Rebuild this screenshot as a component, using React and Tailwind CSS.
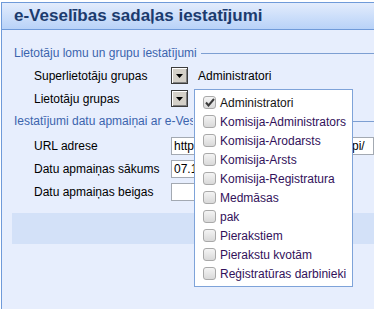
const groups = [
  "Administratori",
  "Komisija-Administrators",
  "Komisija-Arodarsts",
  "Komisija-Arsts",
  "Komisija-Registratura",
  "Medmāsas",
  "pak",
  "Pierakstiem",
  "Pierakstu kvotām",
  "Reģistratūras darbinieki",
];

function DropButton() {
  return (
    <div className="w-[17px] h-[17px] border border-[#3c3c3c] bg-[#d4d0c8] shadow-[inset_1px_1px_0_#ffffff,inset_-1px_-1px_0_#808080] flex items-center justify-center">
      <svg width="7" height="4" viewBox="0 0 7 4">
        <path d="M0 0h7L3.5 4z" fill="#000" />
      </svg>
    </div>
  );
}

function Checkbox({ checked }) {
  return (
    <div className="w-[13px] h-[13px] rounded-[3px] border border-[#a9a9a9] bg-gradient-to-b from-[#f4f4f4] to-[#d9d9d9] flex items-center justify-center">
      {checked && (
        <svg width="10" height="9" viewBox="0 0 10 9">
          <path d="M1 4.5l2.5 3L9 1" fill="none" stroke="#3a3a3a" strokeWidth="2" />
        </svg>
      )}
    </div>
  );
}

// legend with a rule to the right; clip keeps the text out from under the popup
function Legend({ children, clip }) {
  return (
    <div className="flex items-center h-[22px] pl-[12px] text-[12px] text-[#3b64ad]">
      <span className={"whitespace-nowrap overflow-hidden " + (clip ? "w-[179px] shrink-0" : "")}>
        {children}
      </span>
      <div className="flex-1 ml-[4px] h-px bg-[#7d9fd2]" />
    </div>
  );
}

function Row({ label, children }) {
  return (
    <div className="flex items-center h-[23px] pl-[32px]">
      <div className="w-[137px] shrink-0 text-[12px] text-black whitespace-nowrap">{label}</div>
      {children}
    </div>
  );
}

export default function App() {
  return (
    <div className="relative w-[374px] h-[309px] overflow-hidden bg-white font-['Liberation_Sans',Arial,sans-serif]">
      <div className="ml-[1px] mt-[2px] w-[420px] h-[320px] border-l border-t border-[#6f9ad9] bg-[#e7eefd]">
        {/* header */}
        <div className="h-[27px] flex items-center pl-[12px] border-b border-[#6f9ad9] bg-gradient-to-b from-[#e3ecfc] to-[#b8d2f8]">
          <span className="text-[17px] font-bold text-[#1c3b6e] whitespace-nowrap">
            e-Veselības sadaļas iestatījumi
          </span>
        </div>

        <div className="pt-[12px] w-[372px]">
          <Legend>Lietotāju lomu un grupu iestatījumi</Legend>
          <Row label="Superlietotāju grupas">
            <DropButton />
            <span className="ml-[10px] text-[12px] text-black">Administratori</span>
          </Row>
          <Row label="Lietotāju grupas">
            <DropButton />
          </Row>

          <Legend clip>Iestatījumi datu apmaiņai ar e-Veselības portālu</Legend>
          <div className="h-[2px]" />
          <Row label="URL adrese">
            <div className="w-[220px] h-[18px] border border-[#a3a9b2] bg-white flex items-center pl-[2px] text-[12px] text-black whitespace-nowrap overflow-hidden">
              <span className="w-[178px] shrink-0">http:</span>
              <span>pi/</span>
            </div>
          </Row>
          <Row label="Datu apmaiņas sākums">
            <div className="w-[90px] h-[18px] border border-[#a3a9b2] bg-white flex items-center pl-[2px] text-[12px] text-black">
              07.1
            </div>
          </Row>
          <Row label="Datu apmaiņas beigas">
            <div className="w-[90px] h-[18px] border border-[#a3a9b2] bg-white" />
          </Row>

          <div className="mt-[10px] ml-[10px] h-[31px] bg-[#d3e1f8]" />
        </div>
      </div>

      {/* groups dropdown */}
      <div className="absolute left-[194px] top-[89px] w-[159px] h-[198px] border border-[#7ea3d9] bg-white py-[3px]">
        {groups.map((g, i) => (
          <div key={g} className="flex items-center h-[19px] pl-[8px]">
            <Checkbox checked={i === 0} />
            <span
              className={
                "ml-[4px] text-[12px] whitespace-nowrap " +
                (i === 0 ? "text-[#141414]" : "text-[#32115a]")
              }
            >
              {g}
            </span>
          </div>
        ))}
      </div>
    </div>
  );
}
